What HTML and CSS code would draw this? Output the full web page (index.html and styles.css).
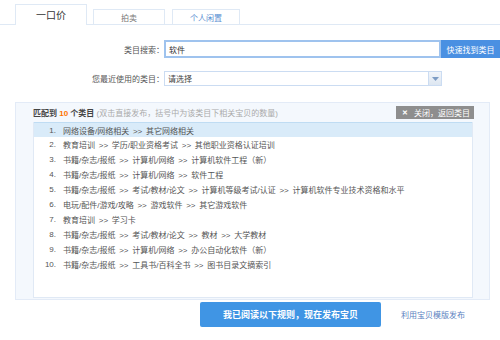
FILE: index.html
```html
<!DOCTYPE html>
<html lang="zh-CN">
<head>
<meta charset="utf-8">
<title>发布宝贝</title>
<link rel="stylesheet" href="styles.css">
</head>
<body>
<div class="page">
  <div class="tabs">
    <div class="tab tab-active">一口价</div>
    <div class="tab tab-grey">拍卖</div>
    <div class="tab tab-blue tab-narrow">个人闲置</div>
  </div>

  <div class="row row-search">
    <div class="label">类目搜索：</div>
    <div class="input">软件</div>
    <div class="quick-btn">快速找到类目</div>
  </div>

  <div class="row row-recent">
    <div class="label">您最近使用的类目：</div>
    <div class="select">
      <span class="select-text">请选择</span>
      <span class="select-arrow"><svg width="7" height="4" viewBox="0 0 7 4"><path d="M0 0h7L3.5 4z" fill="#7d9cc4"/></svg></span>
    </div>
  </div>

  <div class="panel">
    <div class="panel-head">
      <div class="match"><b>匹配到 <span class="num">10</span> 个类目</b> <span class="hint">(双击直接发布，括号中为该类目下相关宝贝的数量)</span></div>
      <div class="close-btn"><span class="x">✕</span>关闭，返回类目</div>
    </div>
    <ol class="list">
      <li class="on"><span class="n">1.</span>网络设备/网络相关 &gt;&gt; 其它网络相关</li>
      <li><span class="n">2.</span>教育培训 &gt;&gt; 学历/职业资格考试 &gt;&gt; 其他职业资格认证培训</li>
      <li><span class="n">3.</span>书籍/杂志/报纸 &gt;&gt; 计算机/网络 &gt;&gt; 计算机软件工程（新）</li>
      <li><span class="n">4.</span>书籍/杂志/报纸 &gt;&gt; 计算机/网络 &gt;&gt; 软件工程</li>
      <li><span class="n">5.</span>书籍/杂志/报纸 &gt;&gt; 考试/教材/论文 &gt;&gt; 计算机等级考试/认证 &gt;&gt; 计算机软件专业技术资格和水平</li>
      <li><span class="n">6.</span>电玩/配件/游戏/攻略 &gt;&gt; 游戏软件 &gt;&gt; 其它游戏软件</li>
      <li><span class="n">7.</span>教育培训 &gt;&gt; 学习卡</li>
      <li><span class="n">8.</span>书籍/杂志/报纸 &gt;&gt; 考试/教材/论文 &gt;&gt; 教材 &gt;&gt; 大学教材</li>
      <li><span class="n">9.</span>书籍/杂志/报纸 &gt;&gt; 计算机/网络 &gt;&gt; 办公自动化软件（新）</li>
      <li><span class="n">10.</span>书籍/杂志/报纸 &gt;&gt; 工具书/百科全书 &gt;&gt; 图书目录文摘索引</li>
    </ol>
  </div>

  <div class="actions">
    <div class="publish-btn">我已阅读以下规则，现在发布宝贝</div>
    <a class="tpl-link">利用宝贝模版发布</a>
  </div>
</div>
</body>
</html>
```

FILE: styles.css
```css
html, body {
  margin: 0;
  padding: 0;
  background: #fff;
}
body {
  font-family: "Liberation Sans", "Noto Sans CJK SC", sans-serif;
  font-size: 8px;
  color: #555;
}
.page {
  width: 500px;
  height: 340px;
  overflow: hidden;
}

/* tabs */
.tabs {
  display: flex;
  align-items: flex-end;
  gap: 6px;
  height: 25px;
  box-sizing: border-box;
  padding-left: 15px;
  border-bottom: 1px solid #dfe9f5;
}
.tab {
  width: 72px;
  box-sizing: border-box;
  border: 1px solid #dfe9f5;
  border-bottom: none;
  text-align: center;
  display: flex;
  align-items: center;
  justify-content: center;
}
.tab-active {
  height: 21px;
  margin-bottom: -1px;
  background: #fff;
  font-size: 10px;
  color: #333;
  padding-bottom: 2px;
}
.tab-grey {
  height: 15px;
  color: #777;
}
.tab-blue {
  height: 15px;
  color: #5b8fd2;
}
.tab-narrow {
  width: 68px;
  margin-left: 1px;
}

/* form rows */
.row {
  display: flex;
  align-items: center;
}
.row-search {
  margin-top: 15px;
  height: 18px;
}
.row-recent {
  margin-top: 13px;
  height: 15px;
}
.label {
  width: 164px;
  text-align: right;
  color: #555;
  flex-shrink: 0;
}
.input {
  width: 277px;
  height: 18px;
  box-sizing: border-box;
  border: 2px solid #9fc3ee;
  background: #fff;
  color: #333;
  padding-left: 3px;
  display: flex;
  align-items: center;
}
.quick-btn {
  width: 59px;
  height: 18px;
  background: #4a90e2;
  color: #fff;
  display: flex;
  align-items: center;
  justify-content: center;
}
.select {
  width: 278px;
  height: 15px;
  box-sizing: border-box;
  border: 1px solid #cbdcf2;
  background: #fff;
  display: flex;
  align-items: center;
  justify-content: space-between;
}
.select-text {
  padding-left: 3px;
  color: #444;
}
.select-arrow {
  width: 13px;
  height: 13px;
  box-sizing: border-box;
  border-left: 1px solid #cbdcf2;
  background: linear-gradient(#f1f5fa, #dde6f1);
  display: flex;
  align-items: center;
  justify-content: center;
}

/* panel */
.panel {
  margin: 16px 0 0 15px;
  width: 475px;
  height: 198px;
  box-sizing: border-box;
  background: #f4f8fd;
  border: 1px solid #e3ebf7;
  display: flex;
  flex-direction: column;
}
.panel-head {
  height: 19px;
  display: flex;
  align-items: center;
  justify-content: space-between;
  padding: 0 15px 0 17px;
}
.match b {
  color: #444;
  font-weight: bold;
}
.match .num {
  color: #ff7300;
}
.hint {
  color: #aaa;
}
.close-btn {
  height: 13px;
  background: #8e8e8e;
  color: #fff;
  padding: 0 4px 0 6px;
  display: flex;
  align-items: center;
  gap: 6px;
}
.close-btn .x {
  font-size: 7px;
  font-weight: bold;
}
.list {
  list-style: none;
  margin: 0 16px 1px 17px;
  padding: 0;
  flex: 1;
  background: #fff;
  border: 1px solid #e0e9f5;
  border-top: none;
}
.list li {
  height: 15px;
  display: flex;
  align-items: center;
  color: #555;
  white-space: pre;
  word-spacing: 1.5px;
}
.list li.on {
  background: #d9ebf9;
  border-top: 1px solid #bfdcf3;
  height: 14px;
}
.list .n {
  width: 22px;
  text-align: right;
  margin-right: 7px;
  flex-shrink: 0;
}

/* actions */
.actions {
  display: flex;
  align-items: center;
  margin-top: 2px;
  padding-left: 200px;
  gap: 20px;
}
.publish-btn {
  width: 181px;
  height: 25px;
  background: #4095e4;
  border-radius: 2px;
  color: #fff;
  font-weight: bold;
  font-size: 9px;
  display: flex;
  align-items: center;
  justify-content: center;
}
.tpl-link {
  color: #5a7fc0;
  text-decoration: none;
}
```
